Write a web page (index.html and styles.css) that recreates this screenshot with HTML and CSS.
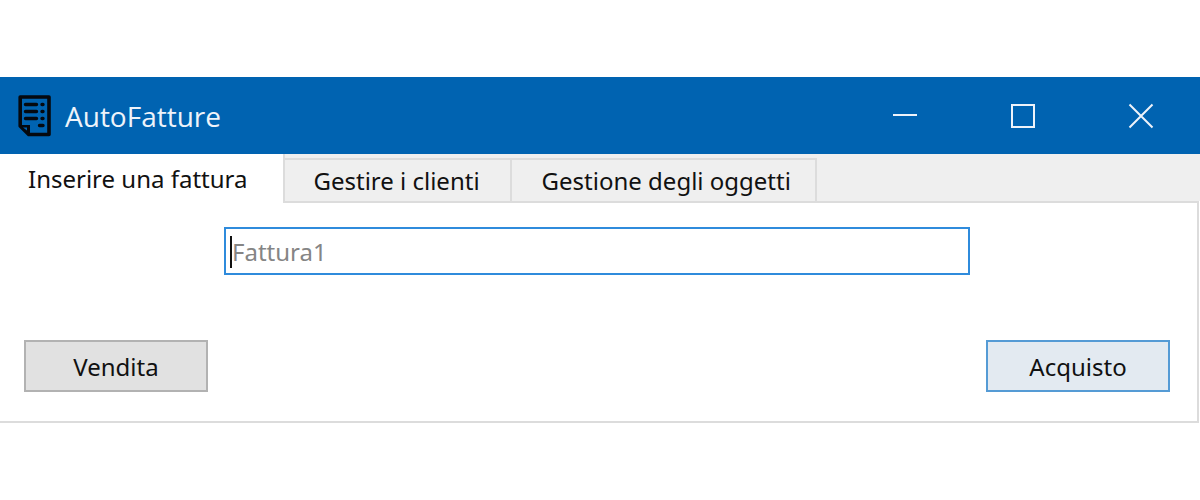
FILE: index.html
```
<!DOCTYPE html>
<html lang="it">
<head>
<meta charset="utf-8">
<title>AutoFatture</title>
<link rel="stylesheet" href="styles.css">
</head>
<body>
<main class="window">
  <header class="titlebar">
    <svg class="logo" viewBox="0 0 34 42" aria-hidden="true">
      <path d="M2.200 2h28.800v37.500h-20.300l-8.500-8.500z" fill="none" stroke="#05090f" stroke-width="3.600" stroke-linejoin="round"/>
      <path d="M2 30h10v10z" fill="#05090f"/>
      <path d="M5 32.500h4v3z" fill="#0063b1"/>
      <path d="M7.500 9.500h11M7.500 16.500h11M7.500 23.500h11M24 9.500h1M24 16.500h1M24 23.500h1M21.500 30.500h3.500" fill="none" stroke="#05090f" stroke-width="3.400" stroke-linecap="round"/>
    </svg>
    <h1 class="title">AutoFatture</h1>
    <div class="controls">
      <button class="control" type="button" aria-label="Riduci a icona"><svg viewBox="0 0 26 26"><path d="M1 12h24"/></svg></button>
      <button class="control" type="button" aria-label="Ingrandisci"><svg viewBox="0 0 26 26"><path d="M2 2h22v22h-22z"/></svg></button>
      <button class="control" type="button" aria-label="Chiudi"><svg viewBox="0 0 26 26"><path d="M1.500 1.500l23 23M24.500 1.500l-23 23"/></svg></button>
    </div>
  </header>
  <div class="tabs" role="tablist">
    <button class="tab tab-active" type="button" role="tab" id="tab-invoice" aria-selected="true" aria-controls="panel">Inserire una fattura</button>
    <button class="tab" type="button" role="tab" aria-selected="false">Gestire i clienti</button>
    <button class="tab tab-last" type="button" role="tab" aria-selected="false">Gestione degli oggetti</button>
  </div>
  <section class="panel" id="panel" role="tabpanel" aria-labelledby="tab-invoice">
    <div class="field">
      <input class="input" type="text" placeholder="Fattura1" aria-label="Nome della fattura">
    </div>
    <button class="button button-sale" type="button">Vendita</button>
    <button class="button button-purchase" type="button">Acquisto</button>
  </section>
</main>
</body>
</html>
```
FILE: styles.css
```
* {
  box-sizing: border-box;
}

body {
  margin: 0;
  padding-top: 77px;
  background: #fff;
  color: #111;
  font-family: "Noto Sans", "DejaVu Sans", sans-serif;
  font-size: 24px;
  line-height: 32px;
}

button,
input {
  margin: 0;
  font: inherit;
  color: inherit;
  border-radius: 0;
}

.titlebar {
  display: flex;
  align-items: center;
  height: 77px;
  padding-left: 18px;
  background: #0063b1;
  color: #eef3fa;
}

.logo {
  width: 34px;
  height: 42px;
}

.title {
  flex: 1;
  margin: 0 0 0 13px;
  font-family: "Open Sans", "Noto Sans", sans-serif;
  font-size: 28px;
  font-weight: 400;
  line-height: 36px;
}

.controls {
  display: flex;
  align-self: stretch;
}

.control {
  display: grid;
  place-items: center;
  width: 118px;
  padding: 0;
  border: 0;
  background: none;
}

.control svg {
  width: 26px;
  height: 26px;
  fill: none;
  stroke: #eef3fa;
  stroke-width: 2;
}

.tabs {
  display: flex;
  align-items: flex-end;
  height: 47px;
  background: #efefef;
}

.tab {
  height: 43px;
  padding: 0 30px 0 28px;
  border: 2px solid #dcdcdc;
  border-width: 2px 2px 0 0;
  background: #efefef;
}

.tab-active {
  position: relative;
  height: 49px;
  margin-bottom: -2px;
  padding: 0 36px 0 28px;
  border-top: 0;
  background: #fff;
}

.tab-last {
  padding: 0 24px 0 30px;
}

.panel {
  display: grid;
  grid-template-columns: 184px 1fr 184px;
  gap: 65px 16px;
  padding: 24px 27px 29px 24px;
  border: 2px solid #dcdcdc;
  border-left: 0;
  margin-right: 1px;
}

.field {
  position: relative;
  grid-column: 2;
}

.field::before {
  content: "";
  position: absolute;
  top: 9px;
  left: 6px;
  width: 2px;
  height: 32px;
  background: #111;
}

.input {
  display: block;
  width: 100%;
  height: 48px;
  padding: 0 6px;
  border: 2px solid #2f8bdc;
  background: #fff;
  outline: 0;
}

.input::placeholder {
  color: #858585;
  opacity: 1;
}

.button {
  height: 52px;
  padding: 2px 8px 0;
  border: 2px solid #b2b2b2;
  background: #e1e1e1;
}

.button-sale {
  grid-column: 1;
}

.button-purchase {
  grid-column: 3;
  border-color: #559bd5;
  background: #e3eaf1;
}
```
